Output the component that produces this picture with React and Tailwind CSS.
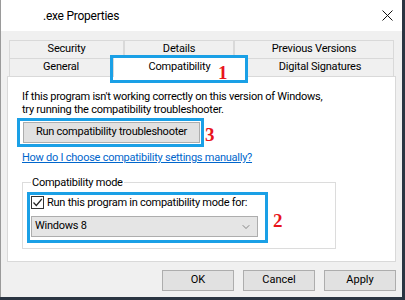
import { ChevronDown } from 'lucide-react';

const font = { fontFamily: 'Roboto, "Liberation Sans", Arial, sans-serif' };

function Tab({ label, w, selected }) {
  if (selected) {
    return (
      <div
        className={`relative z-10 -mt-[2px] h-[21px] ${w} flex items-center justify-center bg-white border-t border-l border-r border-[#d9d9d9] -mb-[1px] text-[11px] tracking-[-0.2px] text-black`}
      >
        {label}
      </div>
    );
  }
  return (
    <div
      className={`h-[18px] ${w} flex items-center justify-center bg-[#f0f0f0] border-t border-l border-r border-[#d9d9d9] text-[11px] tracking-[-0.2px] text-black`}
    >
      {label}
    </div>
  );
}

function Mark({ n, className }) {
  return (
    <span
      className={`absolute font-bold text-[19px] leading-none text-[#e8141b] ${className}`}
      style={{ fontFamily: '"Liberation Serif", "Times New Roman", serif' }}
    >
      {n}
    </span>
  );
}

function WinButton({ children }) {
  return (
    <button
      type="button"
      className="w-[72px] h-[21px] bg-[#e1e1e1] border border-[#adadad] text-[11px] text-black"
    >
      {children}
    </button>
  );
}

export default function App() {
  return (
    <div className="w-[405px] h-[300px] bg-[#2b3542] overflow-hidden" style={font}>
      <div className="w-[402px] h-[297px] bg-[#f0f0f0] border-l border-[#9a9a9a] flex flex-col">
        {/* title bar */}
        <div className="h-[31px] bg-white flex items-center justify-between pl-[42px] pr-[8px]">
          <span className="text-[12px] tracking-[-0.25px] text-black">.exe Properties</span>
          <svg width="11" height="11" viewBox="0 0 11 11" className="mr-[1px]">
            <path d="M0.5 0.5 L10.5 10.5 M10.5 0.5 L0.5 10.5" stroke="#111" strokeWidth="1" />
          </svg>
        </div>

        {/* tabs */}
        <div className="mt-[9px] ml-[8px] flex flex-col">
          <div className="flex">
            <Tab label="Security" w="w-[115px]" />
            <Tab label="Details" w="w-[110px]" />
            <Tab label="Previous Versions" w="w-[160px]" />
          </div>
          <div className="flex items-end">
            <Tab label="General" w="w-[104px]" />
            <div className="relative">
              <Tab label="Compatibility" w="w-[133px]" selected />
              <span className="absolute z-20 -left-[3px] -right-[2px] -top-[3px] -bottom-[7px] border-[3px] border-[#1aa0e6]" />
              <Mark n="1" className="z-20 left-[105px] top-[5px]" />
            </div>
            <Tab label="Digital Signatures" w="w-[148px]" />
          </div>
        </div>

        {/* panel */}
        <div className="ml-[6px] w-[389px] h-[186px] bg-white border border-[#d9d9d9] pl-[14px] pt-[13px] flex flex-col items-start text-[11px] tracking-[-0.25px]">
          <p className="leading-[13px] text-black">
            If this program isn't working correctly on this version of Windows,
            <br />
            try running the compatibility troubleshooter.
          </p>

          <div className="relative mt-[6px] ml-[1px]">
            <button
              type="button"
              className="w-[177px] h-[21px] bg-[#e1e1e1] border border-[#adadad] text-[11px] tracking-[-0.25px] text-black"
            >
              Run compatibility troubleshooter
            </button>
            <span className="absolute -left-[6px] -right-[4px] -top-[4px] -bottom-[4px] border-[3px] border-[#1aa0e6]" />
            <Mark n="3" className="left-[182px] top-[3px]" />
          </div>

          <a className="mt-[8px] leading-[13px] text-[#0066cc] underline">
            How do I choose compatibility settings manually?
          </a>

          <fieldset className="mt-[12px] w-[314px] h-[73px] border border-[#dcdcdc] px-0">
            <legend className="ml-[8px] px-[1px] leading-[13px] text-black">
              Compatibility mode
            </legend>
            <div className="relative mt-[3px] ml-[4px] w-[241px] h-[51px] border-[3px] border-[#1aa0e6] flex flex-col">
              <label className="flex items-center ml-[1px] mt-[1px]">
                <span className="w-[13px] h-[13px] border border-[#333] bg-white flex items-center justify-center">
                  <svg width="11" height="11" viewBox="0 0 11 11">
                    <path d="M1.5 5.5 L4.3 8.5 L9.8 2" fill="none" stroke="#222" strokeWidth="1.2" />
                  </svg>
                </span>
                <span className="ml-[3px] leading-[13px] text-black whitespace-nowrap">
                  Run this program in compatibility mode for:
                </span>
              </label>
              <div className="mt-[7px] ml-[1px] w-[227px] h-[21px] bg-[#e5e5e5] border border-[#adadad] flex items-center justify-between pl-[3px] pr-[5px]">
                <span className="text-black">Windows 8</span>
                <ChevronDown size={12} strokeWidth={1.1} color="#333" />
              </div>
              <Mark n="2" className="left-[243px] top-[16px]" />
            </div>
          </fieldset>
        </div>

        {/* buttons */}
        <div className="mt-[8px] pr-[6px] flex justify-end gap-[9px]">
          <WinButton>OK</WinButton>
          <WinButton>Cancel</WinButton>
          <WinButton>Apply</WinButton>
        </div>
      </div>
    </div>
  );
}
